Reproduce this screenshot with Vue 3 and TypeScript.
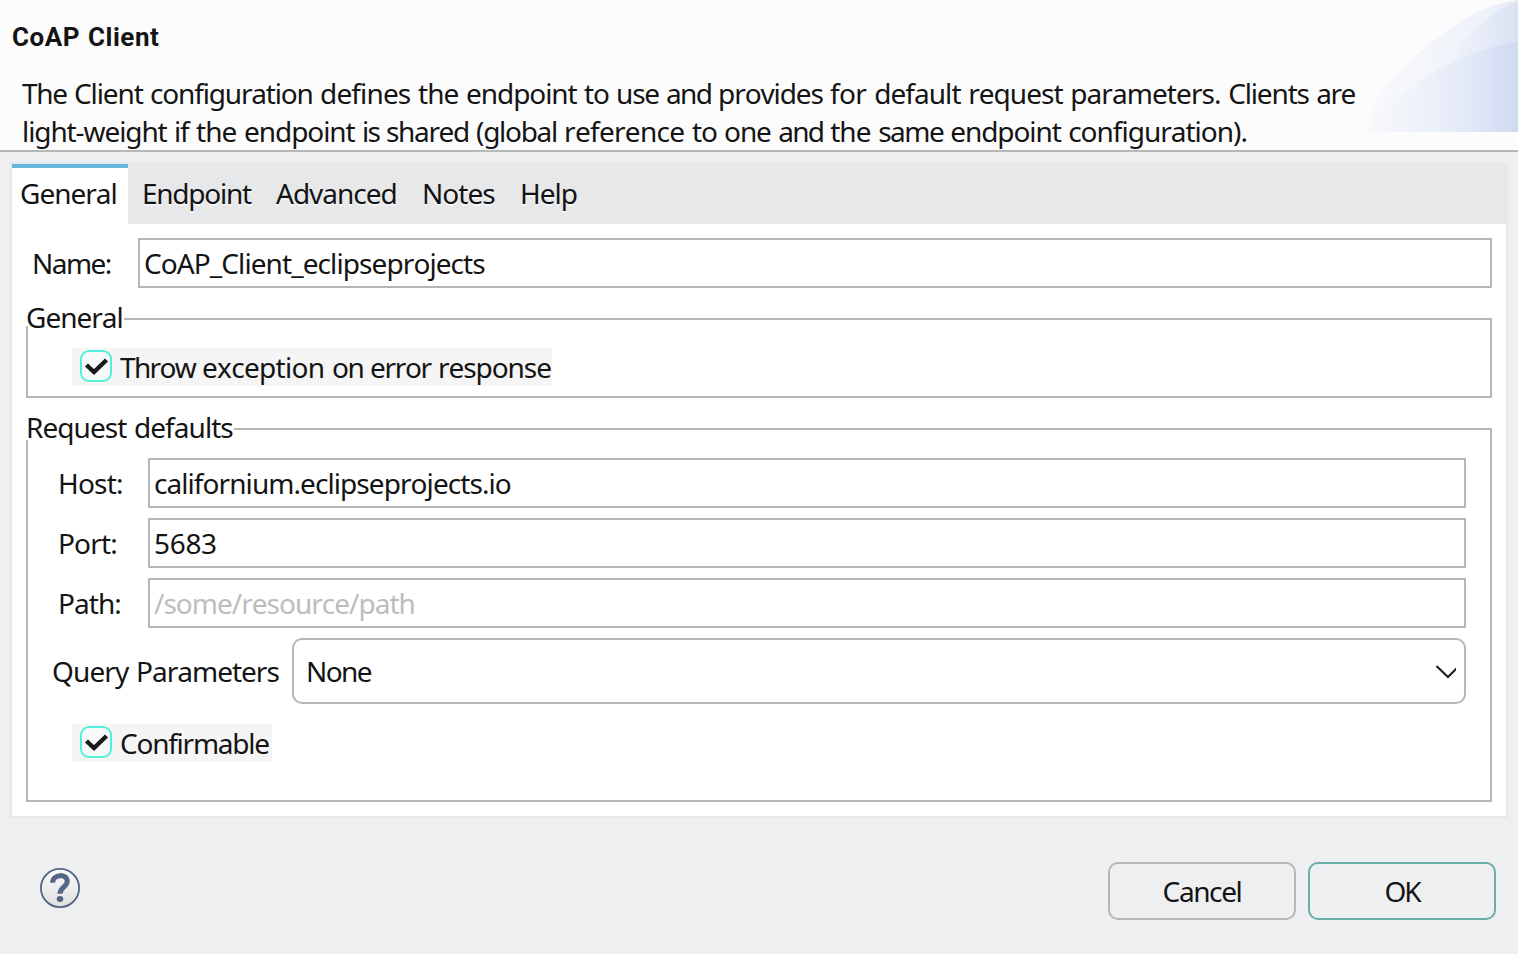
<script setup lang="ts">
import { ref, h, type FunctionalComponent } from 'vue'

interface Tab {
  id: string
  label: string
}

interface Field {
  id: string
  label: string
  value: string
  placeholder?: boolean
}

const advances: Record<string, [number, number]> = {
  ' ': [260, 6], '.': [268, 8], ':': [268, 8], '-': [322, 8], '_': [444, 12], '/': [372, 10],
  '(': [300, 8], ')': [300, 8],
  A: [639, 18], C: [632, 16], E: [556, 14], G: [728, 20], H: [741, 20], K: [619, 16],
  N: [760, 18], O: [781, 20], P: [605, 16], Q: [781, 22], R: [623, 16], T: [556, 14],
  a: [561, 14], b: [615, 16], c: [480, 12], d: [615, 16], e: [564, 16], f: [344, 10],
  g: [615, 16], h: [618, 16], i: [258, 6], j: [258, 6], l: [258, 6], m: [935, 24],
  n: [618, 16], o: [605, 16], p: [615, 16], q: [615, 16], r: [413, 10], s: [479, 12],
  t: [361, 10], u: [618, 16], v: [508, 14], w: [786, 20], x: [529, 16], y: [510, 14],
}
const FONT_SIZE = 28
const LOOSE_PAIR = /te|fo/
// Room kept clear after each word; matches word-spacing in the stylesheet.
const WORD_GAP = 1.2

function tracking(word: string): string {
  let delta = LOOSE_PAIR.test(word) ? 2 : 0
  delta -= WORD_GAP
  for (const ch of word) {
    const [units, px] = advances[ch] ?? [572, 16]
    delta += px - (units * FONT_SIZE) / 1000
  }
  return (delta / word.length).toFixed(3) + 'px'
}

// Text whose words are each tracked to whole-pixel widths.
const SnapText: FunctionalComponent<{ text: string }> = (props) =>
  h(
    'span',
    (props.text.match(/\S+\s?/g) ?? []).map((word) =>
      h('span', { style: { letterSpacing: tracking(word) } }, word),
    ),
  )
SnapText.props = ['text']

const tabs: Tab[] = [
  { id: 'general', label: 'General' },
  { id: 'endpoint', label: 'Endpoint' },
  { id: 'advanced', label: 'Advanced' },
  { id: 'notes', label: 'Notes' },
  { id: 'help', label: 'Help' },
]
const activeTab = ref('general')

const description = [
  'The Client configuration defines the endpoint to use and provides for default request parameters. Clients are',
  'light-weight if the endpoint is shared (global reference to one and the same endpoint configuration).',
]

const fields: Field[] = [
  { id: 'host', label: 'Host:', value: 'californium.eclipseprojects.io' },
  { id: 'port', label: 'Port:', value: '5683' },
  { id: 'path', label: 'Path:', value: '/some/resource/path', placeholder: true },
]

const throwOnError = ref(true)
const confirmable = ref(true)
</script>

<template>
  <div class="dialog">
    <header class="header">
      <svg class="banner" width="150" height="132" viewBox="0 0 150 132">
        <defs>
          <linearGradient id="sweep" x1="0" x2="1" y1="0" y2="0">
            <stop offset="0" stop-color="#f8f9fb" />
            <stop offset="0.55" stop-color="#f1f4fa" />
            <stop offset="0.8" stop-color="#eef2f9" />
            <stop offset="1" stop-color="#e8eef7" />
          </linearGradient>
          <linearGradient id="sweepMid" gradientUnits="userSpaceOnUse" x1="75" x2="150" y1="0" y2="0">
            <stop offset="0" stop-color="#f0f3fb" />
            <stop offset="0.5" stop-color="#e7ecf8" />
            <stop offset="1" stop-color="#d9e2f4" />
          </linearGradient>
          <linearGradient id="sweepLow" gradientUnits="userSpaceOnUse" x1="0" x2="150" y1="0" y2="0">
            <stop offset="0" stop-color="#f7f8fb" />
            <stop offset="0.35" stop-color="#eef2fa" />
            <stop offset="0.7" stop-color="#e1e7f6" />
            <stop offset="1" stop-color="#cedaf1" />
          </linearGradient>
        </defs>
        <path d="M0 132C0 108 13 89 30 73C62 40 108 4 150 0V132Z" fill="url(#sweep)" />
        <path d="M150 1C122 12 98 35 85 60L110 80L150 60Z" fill="url(#sweepMid)" />
        <path d="M0 132Q8 112 39 90Q98 48 150 42V132Z" fill="url(#sweepLow)" />
      </svg>
      <h1 class="title">CoAP Client</h1>
      <p class="description">
        <SnapText v-for="line in description" :key="line" class="line" :text="line" />
      </p>
    </header>

    <main class="folder">
      <nav class="tabs">
        <div
          v-for="tab in tabs"
          :key="tab.id"
          :class="['tab', { active: tab.id === activeTab }]"
          @click="activeTab = tab.id"
        ><SnapText :text="tab.label" /></div>
      </nav>

      <section class="pane">
        <div class="row name-row">
          <label class="label"><SnapText text="Name:" /></label>
          <div class="input"><SnapText text="CoAP_Client_eclipseprojects" /></div>
        </div>

        <div class="group general-group">
          <div class="legend legend-general"><SnapText text="General" /></div>
          <div class="check" @click="throwOnError = !throwOnError">
            <svg class="box" width="32" height="32" viewBox="0 0 32 32">
              <rect x="1" y="1" width="30" height="30" rx="8" />
              <path v-if="throwOnError" d="M6.5 15L14 22L26.5 10" />
            </svg>
            <SnapText class="caption" text="Throw exception on error response" />
          </div>
        </div>

        <div class="group defaults-group">
          <div class="legend legend-defaults"><SnapText text="Request defaults" /></div>
          <div v-for="field in fields" :key="field.id" class="row field-row">
            <label class="label"><SnapText :text="field.label" /></label>
            <div :class="['input', { placeholder: field.placeholder }]"><SnapText :text="field.value" /></div>
          </div>
          <div class="row query-row">
            <label class="label"><SnapText text="Query Parameters" /></label>
            <div class="select">
              <SnapText text="None" />
              <svg class="chevron" width="20" height="14" viewBox="0 0 20 14">
                <path d="M0.5 1L12 12L21 3" />
              </svg>
            </div>
          </div>
          <div class="check confirm" @click="confirmable = !confirmable">
            <svg class="box" width="32" height="32" viewBox="0 0 32 32">
              <rect x="1" y="1" width="30" height="30" rx="8" />
              <path v-if="confirmable" d="M6.5 15L14 22L26.5 10" />
            </svg>
            <SnapText class="caption" text="Confirmable" />
          </div>
        </div>
      </section>
    </main>

    <footer class="footer">
      <svg class="help-icon" width="40" height="40" viewBox="0 0 40 40">
        <defs>
          <linearGradient id="helpFill" x1="0" x2="0" y1="0" y2="1">
            <stop offset="0" stop-color="#fafafa" />
            <stop offset="1" stop-color="#e0e0e0" />
          </linearGradient>
        </defs>
        <circle cx="20" cy="20" r="19.1" fill="url(#helpFill)" stroke="#536685" stroke-width="1.8" />
        <path d="M12.6 14.8C12.8 5.6 27.2 5.4 27.2 13.3C27.2 19 20 18.8 20 25.8" fill="none" stroke="#536685" stroke-width="5" />
        <ellipse cx="20" cy="31" rx="3.3" ry="2.9" fill="#536685" />
      </svg>
      <div class="buttons">
        <button class="button"><SnapText text="Cancel" /></button>
        <button class="button ok"><SnapText text="OK" /></button>
      </div>
    </footer>
  </div>
</template>

<style>
body {
  margin: 0;
  background: #eeeff1;
}
</style>

<style scoped>
.dialog {
  width: 1518px;
  height: 954px;
  box-sizing: border-box;
  overflow: hidden;
  background: #eeeff1;
  color: #141414;
  font-family: "Noto Sans", sans-serif;
  font-size: 28px;
  font-kerning: none;
  font-variant-ligatures: none;
  line-height: 38px;
  white-space: pre;
  word-spacing: 1.2px;
}
.dialog * {
  box-sizing: border-box;
}
.header {
  position: relative;
  height: 152px;
  padding-top: 18px;
  background: #fcfcfc;
  border-bottom: 2px solid #b6b7b7;
}
.title {
  position: relative;
  margin: 0 0 18px 12px;
  font-family: Roboto, sans-serif;
  font-weight: 700;
  font-size: 26px;
  line-height: 38px;
  letter-spacing: 0.5px;
}
.description {
  position: relative;
  display: flex;
  flex-direction: column;
  margin: 0 0 0 22px;
}
.banner {
  position: absolute;
  top: 0;
  right: 0;
}
.folder {
  margin: 10px 10px 0;
  height: 656px;
  border: 2px solid #e7e8ea;
  background: #fff;
}
.tabs {
  display: flex;
  height: 60px;
  background: #e7e8ea;
}
.tab {
  padding: 10px 0 0 0;
  margin-right: 25.2px;
  text-shadow: 0 2px 0 #f6f6f7;
}
.tab.active {
  width: 116px;
  margin-right: 14px;
  padding: 6px 0 0 8px;
  background: #fff;
  border-top: 4px solid #69b6dd;
  text-shadow: none;
}
.pane {
  padding: 14px;
}
.row {
  display: flex;
}
.label {
  flex: none;
  padding-top: 6px;
}
.input {
  flex: 1;
  height: 50px;
  padding: 4px;
  border: 2px solid #b6b6b6;
  background: #fff;
}
.placeholder {
  color: #bdbdbd;
}
.name-row .label {
  width: 112px;
  padding-left: 6px;
}
.group {
  position: relative;
  border: 2px solid #b6b6b6;
}
.general-group {
  height: 80px;
  margin-top: 30px;
  padding: 28px 0 0 44px;
}
.defaults-group {
  height: 374px;
  margin-top: 30px;
  padding: 28px 24px 0;
}
.legend {
  position: absolute;
  left: -2px;
  top: -22px;
  background: #fff;
}
.legend-general {
  width: 98px;
  height: 28px;
}
.legend-defaults {
  width: 208px;
  height: 32px;
}
.check {
  display: flex;
  width: 480px;
  height: 38px;
  padding: 2px 0 0 8px;
  background: #f5f5f5;
}
.caption {
  margin: -2px 0 0 8px;
}
.check.confirm {
  width: 200px;
  margin: 20px 0 0 20px;
}
.box {
  flex: none;
}
.box rect {
  fill: #fafafa;
  stroke: #52f0d8;
  stroke-width: 2;
}
.box path {
  fill: none;
  stroke: #1a1a1a;
  stroke-width: 4.4;
}
.field-row {
  margin: 0 0 10px;
}
.field-row .label {
  width: 96px;
  padding-left: 6px;
}
.query-row .label {
  width: 240px;
  padding-top: 14px;
}
.select {
  display: flex;
  flex: 1;
  justify-content: space-between;
  height: 66px;
  padding: 12px 8px 0 12px;
  border: 2px solid #b6b6b6;
  border-radius: 10px;
}
.chevron {
  margin-top: 13px;
}
.chevron path {
  fill: none;
  stroke: #1c1c1c;
  stroke-width: 2;
}
.footer {
  display: flex;
  justify-content: space-between;
  padding: 44px 22px 0 40px;
}
.help-icon {
  margin-top: 6px;
}
.buttons {
  display: flex;
  gap: 12px;
}
.button {
  width: 188px;
  height: 58px;
  padding: 0;
  border: 2px solid #b6b6b6;
  border-radius: 10px;
  background: #eeeff1;
  color: inherit;
  font: inherit;
}
.button.ok {
  border-color: #69aea6;
}
</style>
